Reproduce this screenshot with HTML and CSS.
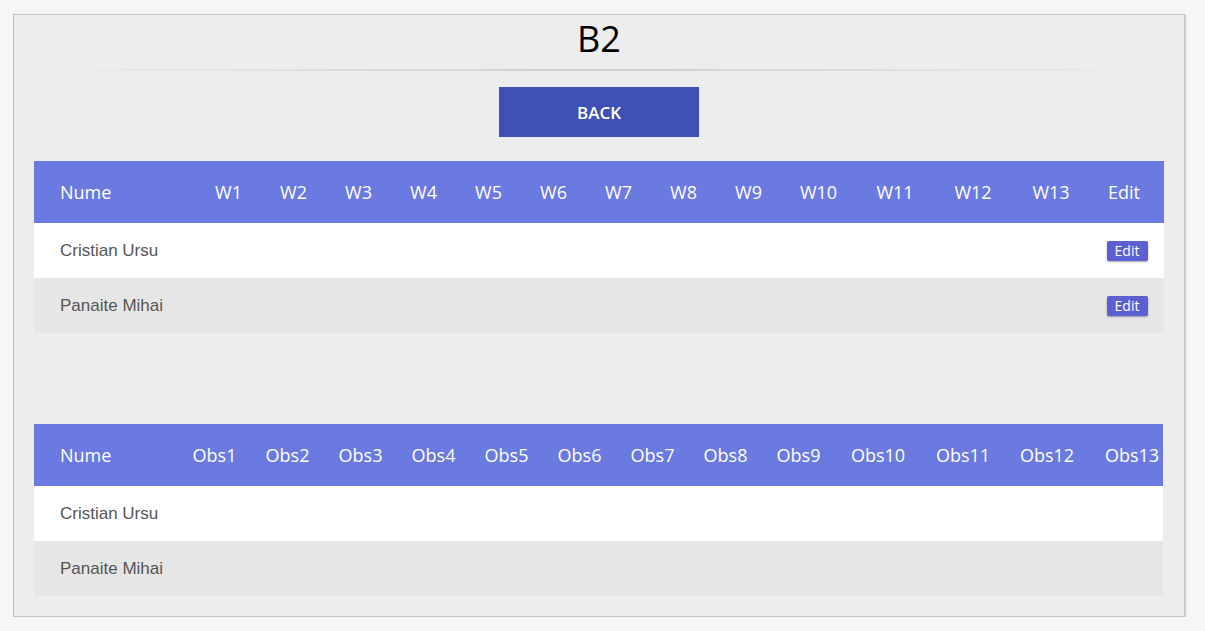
FILE: index.html
```html
<!DOCTYPE html>
<html lang="ro">
<head>
<meta charset="utf-8">
<title>B2</title>
<link rel="stylesheet" href="styles.css">
</head>
<body>
<div class="card">
  <h1 class="title">B2</h1>
  <hr class="divider">
  <div class="actions"><a class="back-btn" href="#">BACK</a></div>

  <div class="grid grid-weeks">
    <div class="cell head name">Nume</div>
    <div class="cell head">W1</div>
    <div class="cell head">W2</div>
    <div class="cell head">W3</div>
    <div class="cell head">W4</div>
    <div class="cell head">W5</div>
    <div class="cell head">W6</div>
    <div class="cell head">W7</div>
    <div class="cell head">W8</div>
    <div class="cell head">W9</div>
    <div class="cell head">W10</div>
    <div class="cell head">W11</div>
    <div class="cell head">W12</div>
    <div class="cell head">W13</div>
    <div class="cell head edit-col">Edit</div>

    <div class="cell row odd name">Cristian Ursu</div>
    <div class="cell row odd"></div><div class="cell row odd"></div><div class="cell row odd"></div>
    <div class="cell row odd"></div><div class="cell row odd"></div><div class="cell row odd"></div>
    <div class="cell row odd"></div><div class="cell row odd"></div><div class="cell row odd"></div>
    <div class="cell row odd"></div><div class="cell row odd"></div><div class="cell row odd"></div>
    <div class="cell row odd"></div>
    <div class="cell row odd"><button class="edit-btn">Edit</button></div>

    <div class="cell row even name">Panaite Mihai</div>
    <div class="cell row even"></div><div class="cell row even"></div><div class="cell row even"></div>
    <div class="cell row even"></div><div class="cell row even"></div><div class="cell row even"></div>
    <div class="cell row even"></div><div class="cell row even"></div><div class="cell row even"></div>
    <div class="cell row even"></div><div class="cell row even"></div><div class="cell row even"></div>
    <div class="cell row even"></div>
    <div class="cell row even"><button class="edit-btn">Edit</button></div>
  </div>

  <div class="grid grid-obs">
    <div class="cell head name">Nume</div>
    <div class="cell head">Obs1</div>
    <div class="cell head">Obs2</div>
    <div class="cell head">Obs3</div>
    <div class="cell head">Obs4</div>
    <div class="cell head">Obs5</div>
    <div class="cell head">Obs6</div>
    <div class="cell head">Obs7</div>
    <div class="cell head">Obs8</div>
    <div class="cell head">Obs9</div>
    <div class="cell head">Obs10</div>
    <div class="cell head">Obs11</div>
    <div class="cell head">Obs12</div>
    <div class="cell head last">Obs13</div>

    <div class="cell row odd name">Cristian Ursu</div>
    <div class="cell row odd"></div><div class="cell row odd"></div><div class="cell row odd"></div>
    <div class="cell row odd"></div><div class="cell row odd"></div><div class="cell row odd"></div>
    <div class="cell row odd"></div><div class="cell row odd"></div><div class="cell row odd"></div>
    <div class="cell row odd"></div><div class="cell row odd"></div><div class="cell row odd"></div>
    <div class="cell row odd"></div>

    <div class="cell row even name">Panaite Mihai</div>
    <div class="cell row even"></div><div class="cell row even"></div><div class="cell row even"></div>
    <div class="cell row even"></div><div class="cell row even"></div><div class="cell row even"></div>
    <div class="cell row even"></div><div class="cell row even"></div><div class="cell row even"></div>
    <div class="cell row even"></div><div class="cell row even"></div><div class="cell row even"></div>
    <div class="cell row even"></div>
  </div>
</div>
</body>
</html>
```
FILE: styles.css
```css
html, body {
  margin: 0;
  padding: 0;
}
body {
  background: #f6f6f6;
  font-family: "Open Sans", "Liberation Sans", sans-serif;
  padding: 14px 20px 0 13px;
}
.card {
  background: #ededed;
  border: 1px solid #c2c2c2;
  box-shadow: 1px 1px 2px rgba(0, 0, 0, 0.18);
  padding: 3px 20px 19px 20px;
  height: 579px;
}
.title {
  margin: 0;
  text-align: center;
  font-family: "Open Sans", sans-serif;
  font-weight: 400;
  font-size: 36px;
  line-height: 42px;
  color: #000;
}
.divider {
  border: 0;
  height: 2px;
  margin: 9px 0 0 0;
  background: linear-gradient(to right, rgba(204,204,204,0), #cfcfcf 50%, rgba(204,204,204,0));
}
.actions {
  display: flex;
  justify-content: center;
  margin-top: 16px;
}
.back-btn {
  display: flex;
  align-items: center;
  justify-content: center;
  width: 200px;
  height: 50px;
  background: #3f51b5;
  color: #fff;
  text-decoration: none;
  font-family: "Open Sans", sans-serif;
  font-weight: 600;
  font-size: 17px;
}
.grid {
  display: grid;
  width: 1130px;
}
.grid-weeks {
  margin-top: 24px;
  grid-template-columns: 162px repeat(9, 65px) 75px 78px 78px 78px 74px;
  grid-template-rows: 62px 55px 55px;
}
.grid-obs {
  margin-top: 91px;
  grid-template-columns: 144px repeat(9, 73px) 86px 84px 84px 74px;
  grid-template-rows: 62px 55px 55px;
}
.cell {
  display: flex;
  align-items: center;
  justify-content: center;
  white-space: nowrap;
}
.cell.name {
  justify-content: flex-start;
  padding-left: 26px;
}
.head {
  background: #6b7ae0;
  color: #fff;
  font-family: "Open Sans", sans-serif;
  font-size: 18px;
}
.head.edit-col {
  padding-right: 6px;
}
.head.last {
  padding-left: 12px;
}
.row {
  font-family: "Liberation Sans", Arial, sans-serif;
  font-size: 17px;
  color: #555;
}
.row.odd {
  background: #fff;
}
.row.even {
  background: #e6e6e6;
}
.edit-btn {
  width: 41px;
  height: 20px;
  padding: 0;
  border: 0;
  border-radius: 2px;
  background: #5a5fd2;
  color: #fff;
  font-family: "Open Sans", sans-serif;
  font-size: 14px;
  line-height: 20px;
  box-shadow: 0 1px 2px rgba(0, 0, 0, 0.35);
  cursor: pointer;
}
```
